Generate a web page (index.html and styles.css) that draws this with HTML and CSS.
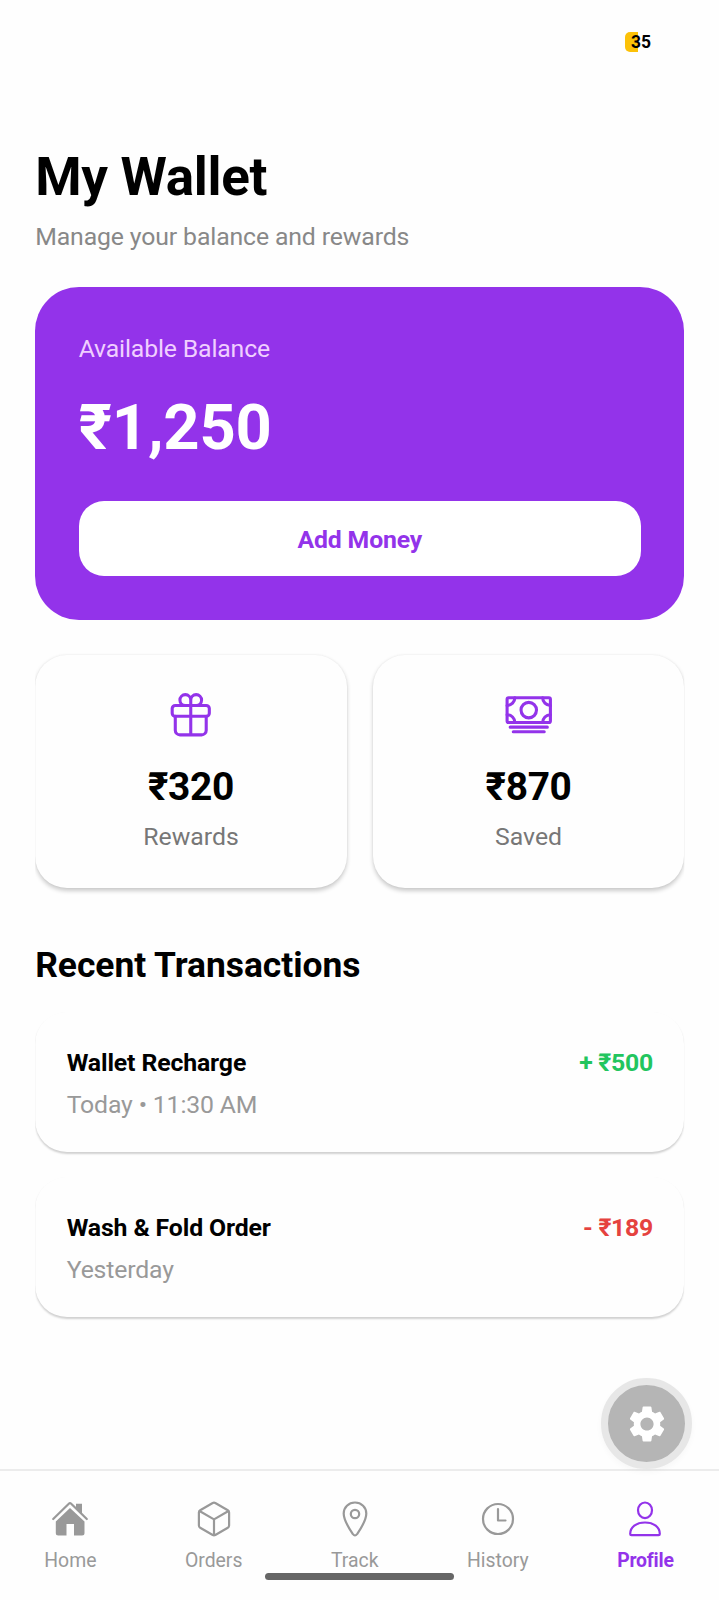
FILE: index.html
```html
<!DOCTYPE html>
<html lang="en">
<head>
<meta charset="utf-8">
<title>My Wallet</title>
<link rel="stylesheet" href="styles.css">
</head>
<body>
<div class="screen">
  <header class="status"><span class="battery">35</span></header>
  <main class="content">
    <h1 class="title">My Wallet</h1>
    <p class="subtitle">Manage your balance and rewards</p>

    <section class="balance">
      <p class="balance-label">Available Balance</p>
      <p class="balance-value">₹1,250</p>
      <button class="add">Add Money</button>
    </section>

    <section class="stats">
      <div class="stat">
        <svg class="stat-icon" viewBox="0 0 512 512">
          <path d="M256 104v56h56a56 56 0 1 0-56-56zM256 104v56h-56a56 56 0 1 1 56-56z"/>
          <rect x="64" y="160" width="384" height="112" rx="32"/>
          <path d="M416 272v144a48 48 0 0 1-48 48H144a48 48 0 0 1-48-48V272M256 160v304"/>
        </svg>
        <p class="stat-value">₹320</p>
        <p class="stat-label">Rewards</p>
      </div>
      <div class="stat">
        <svg class="stat-icon" viewBox="0 0 512 512">
          <rect x="32" y="80" width="448" height="256" rx="16"/>
          <path d="M64 384h384M96 432h320"/>
          <circle cx="256" cy="208" r="80"/>
          <path d="M480 160a80 80 0 0 1-80-80M32 160a80 80 0 0 0 80-80M480 256a80 80 0 0 0-80 80M32 256a80 80 0 0 1 80 80"/>
        </svg>
        <p class="stat-value">₹870</p>
        <p class="stat-label">Saved</p>
      </div>
    </section>

    <h2 class="heading">Recent Transactions</h2>
    <section class="transactions">
      <article class="transaction">
        <div>
          <p class="tx-name">Wallet Recharge</p>
          <p class="tx-time">Today • 11:30 AM</p>
        </div>
        <p class="amount credit">+ ₹500</p>
      </article>
      <article class="transaction">
        <div>
          <p class="tx-name">Wash &amp; Fold Order</p>
          <p class="tx-time">Yesterday</p>
        </div>
        <p class="amount debit">- ₹189</p>
      </article>
    </section>
  </main>

  <button class="fab" aria-label="Settings">
    <svg class="gear" viewBox="0 0 24 24"><path d="M19.14 12.94c.04-.3.06-.61.06-.94 0-.32-.02-.64-.07-.94l2.03-1.58c.18-.14.23-.41.12-.61l-1.92-3.32c-.12-.22-.37-.29-.59-.22l-2.39.96c-.5-.38-1.03-.7-1.62-.94l-.36-2.54c-.04-.24-.24-.41-.48-.41h-3.84c-.24 0-.43.17-.47.41l-.36 2.54c-.59.24-1.13.57-1.62.94l-2.39-.96c-.22-.08-.47 0-.59.22L2.74 8.87c-.12.21-.08.47.12.61l2.03 1.58c-.05.3-.09.63-.09.94s.02.64.07.94l-2.03 1.58c-.18.14-.23.41-.12.61l1.92 3.32c.12.22.37.29.59.22l2.39-.96c.5.38 1.03.7 1.62.94l.36 2.54c.05.24.24.41.48.41h3.84c.24 0 .44-.17.47-.41l.36-2.54c.59-.24 1.13-.56 1.62-.94l2.39.96c.22.08.47 0 .59-.22l1.92-3.32c.12-.22.07-.47-.12-.61l-2.01-1.58zM12 15.6c-1.98 0-3.6-1.62-3.6-3.6s1.62-3.6 3.6-3.6 3.6 1.62 3.6 3.6-1.62 3.6-3.6 3.6z"/></svg>
  </button>

  <nav class="tabs">
    <a class="tab">
      <svg class="tab-icon" viewBox="0 0 40 40">
        <path class="solid" d="M20 9 34.500 22.500V34a2.500 2.500 0 0 1-2.500 2.500h-8V25h-7.500v11.500H8.300A2.500 2.500 0 0 1 5.800 34V22.500z"/>
        <path class="solid" d="M26 4.800h6v10.500L26 9.500z"/>
        <path d="M3.200 20 18.800 4.800a1.700 1.700 0 0 1 2.400 0L36.800 20"/>
      </svg>
      <span>Home</span>
    </a>
    <a class="tab">
      <svg class="tab-icon" viewBox="0 0 40 40">
        <path d="M18.700 4 6.200 11.200q-1.300.8-1.300 2.300v13q0 1.500 1.300 2.300L18.700 36q1.300.7 2.600 0l12.500-7.200q1.300-.8 1.300-2.300v-13q0-1.500-1.300-2.300L21.300 4q-1.300-.7-2.600 0zM5.500 12 20 20.400 34.500 12M20 20.400v16"/>
      </svg>
      <span>Orders</span>
    </a>
    <a class="tab">
      <svg class="tab-icon" viewBox="0 0 40 40">
        <path d="M20 3.500C13.600 3.500 8.700 8.300 8.700 14.500c0 7.400 6 15.900 9.300 20.700q2 2.600 4 0c3.300-4.800 9.300-13.300 9.300-20.700 0-6.200-4.900-11-11.300-11z"/>
        <circle cx="20" cy="15" r="4.200"/>
      </svg>
      <span>Track</span>
    </a>
    <a class="tab">
      <svg class="tab-icon" viewBox="0 0 40 40">
        <circle cx="20" cy="20" r="15"/>
        <path d="M20 10v11.500h7.500"/>
      </svg>
      <span>History</span>
    </a>
    <a class="tab active">
      <svg class="tab-icon" viewBox="0 0 40 40">
        <ellipse cx="20" cy="11.300" rx="7" ry="7.800"/>
        <path d="M5.200 34.900c0-6.700 6-11.400 14.800-11.400s14.800 4.700 14.800 11.400q0 1.300-1.300 1.300h-27q-1.300 0-1.300-1.300z"/>
      </svg>
      <span>Profile</span>
    </a>
  </nav>
  <div class="home-bar"></div>
</div>
</body>
</html>
```
FILE: styles.css
```css
* { box-sizing: border-box; }
body { margin: 0; background: #fff; font-family: Roboto, "Noto Sans", sans-serif; color: #000; }
h1, h2, p { margin: 0; }
button { font-family: inherit; border: 0; }

.screen { position: relative; display: flex; flex-direction: column; height: 1600px; overflow: hidden; background: #fefefe; }
.status { height: 146px; padding: 32px 0 0 625px; }
.battery {
  display: block; width: 30px; height: 20px; padding-left: 6px;
  font-size: 17.500px; font-weight: 700; line-height: 20px;
  background: linear-gradient(#fcc108, #fcc108) left / 13px 20px no-repeat;
  border-radius: 5px 0 0 5px;
}

.content { flex: 1; padding: 0 34.600px 0 35.200px; letter-spacing: -.13px; }
.title { font-size: 53px; line-height: 62px; font-weight: 700; letter-spacing: -.3px; }
.subtitle { margin-top: 13.500px; font-size: 24.8px; line-height: 30px; color: #888; }

.balance { margin-top: 35.500px; padding: 44.500px 43.500px 43.500px; border-radius: 44px; background: #9333ea; }
.balance-label { font-size: 24.8px; line-height: 34px; color: #f0cfff; letter-spacing: -.16px; }
.balance-value { margin-top: 24.500px; font-size: 63.300px; line-height: 74px; font-weight: 700; color: #fff; letter-spacing: -.2px; }
.add {
  display: block; width: 100%; height: 75px; margin-top: 37px; padding: 2px 0 0;
  border-radius: 25px; background: #fff; color: #9333ea; font-size: 24.8px; font-weight: 700; letter-spacing: -.15px;
}

.stats { display: flex; gap: 26px; margin-top: 35.500px; clip-path: inset(-10px 0); }
.stat {
  flex: 1; display: flex; flex-direction: column; align-items: center;
  height: 232.500px; padding-top: 35px; border-radius: 32px; background: #fefefe;
  box-shadow: 0 2.500px 4px rgba(0, 0, 0, .2), 0 0 2px rgba(0, 0, 0, .05);
}
.stat-icon { width: 49.500px; height: 49.500px; fill: none; stroke: #9333ea; stroke-width: 32; stroke-linecap: round; stroke-linejoin: round; }
.stat-value { margin-top: 24px; font-size: 38.900px; line-height: 46px; font-weight: 700; letter-spacing: -.35px; }
.stat-label { margin-top: 12.500px; font-size: 24.8px; line-height: 30px; color: #777; letter-spacing: 0; }

.heading { margin-top: 56px; font-size: 35.400px; line-height: 42px; font-weight: 700; letter-spacing: -.03px; }
.transactions { display: flex; flex-direction: column; gap: 25.500px; margin-top: 26.900px; clip-path: inset(-10px 0); }
.transaction {
  display: flex; justify-content: space-between; height: 139.500px; padding: 35.300px 31.500px 0;
  border-radius: 32px; background: #fefefe; font-size: 24.8px; line-height: 30px;
  box-shadow: 0 2px 2px rgba(0, 0, 0, .18), 0 0 1px rgba(0, 0, 0, .02);
}
.tx-name, .amount { font-weight: 700; }
.amount { letter-spacing: -.3px; }
.tx-time { margin-top: 12.500px; color: #999; letter-spacing: -.16px; }
.credit { color: #22c55e; }
.debit { color: #e5423f; }

.fab {
  position: absolute; left: 601px; top: 1378px; width: 91px; height: 91px; padding: 0;
  display: flex; align-items: center; justify-content: center;
  border: 7px solid #e7e7e7; border-radius: 50%; background: #b5b5b5;
  box-shadow: 0 3px 6px rgba(0, 0, 0, .03);
}
.gear { width: 44px; height: 44px; fill: #fff; }

.tabs { display: flex; justify-content: space-around; height: 131px; padding: 28px 1px 0 0; border-top: 2px solid #ececec; background: #fefefe; }
.tab { display: flex; flex-direction: column; align-items: center; color: #999; font-size: 19.400px; line-height: 24px; }
.tab span { margin-top: 10px; }
.tab-icon { width: 40px; height: 40px; fill: none; stroke: currentColor; stroke-width: 2.200; stroke-linecap: round; stroke-linejoin: round; }
.tab-icon .solid { fill: currentColor; stroke: none; }
.active { color: #9333ea; font-weight: 700; letter-spacing: -.2px; }
.home-bar { position: absolute; left: 265px; top: 1573px; width: 189px; height: 7px; border-radius: 4px; background: #666; }
```
